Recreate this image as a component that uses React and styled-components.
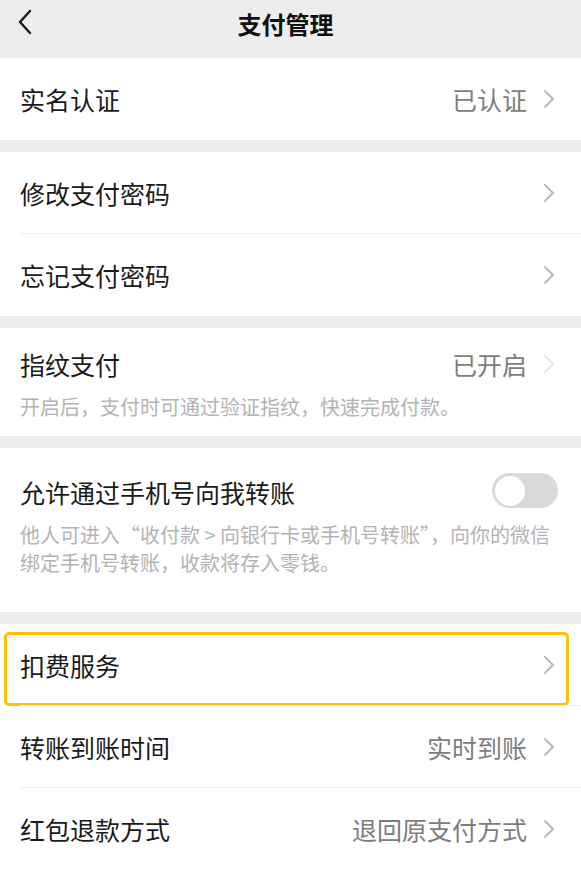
import React from "react";
import styled, { createGlobalStyle } from "styled-components";

const GlobalStyle = createGlobalStyle`
  * { box-sizing: border-box; }
  html, body { margin: 0; padding: 0; background: #ededed; }
  body {
    font-family: "Noto Sans CJK SC", "Noto Sans", "Liberation Sans", sans-serif;
    -webkit-font-smoothing: antialiased;
  }
`;

const Page = styled.div`
  width: 581px;
  min-height: 869px;
  background: #ededed;
  display: flex;
  flex-direction: column;
  gap: 12px;
  overflow: hidden;
`;

const Header = styled.header`
  height: 58px;
  display: grid;
  grid-template-columns: 60px 1fr 60px;
  align-items: start;
  background: #ededed;
  margin-bottom: -12px;
`;

const BackButton = styled.button`
  border: none;
  background: none;
  padding: 9px 0 0 16px;
  display: flex;
  align-items: center;
  color: #1a1a1a;
  cursor: pointer;
`;

const Title = styled.h1`
  margin: 0;
  padding-top: 8px;
  padding-right: 10px;
  text-align: center;
  font-size: 24px;
  font-weight: 600;
  line-height: 32px;
  color: #111;
`;

const Section = styled.section`
  background: #fff;
  display: flex;
  flex-direction: column;
`;

const Row = styled.div`
  position: relative;
  height: 82px;
  display: flex;
  align-items: center;
  padding: 0 26px 0 20px;
  &:not(:last-child)::after {
    content: "";
    position: absolute;
    left: 20px;
    right: 0;
    bottom: 0;
    height: 1px;
    background: #ececec;
  }
`;

const Label = styled.span`
  flex: 1;
  font-size: 25px;
  line-height: 30px;
  color: #1a1a1a;
`;

const Value = styled.span`
  font-size: 25px;
  line-height: 30px;
  color: #7d7d7d;
  margin-right: 16px;
`;

const Block = styled.div`
  padding: ${(p) => p.$pad};
  display: flex;
  flex-direction: column;
  gap: 14px;
`;

const BlockHead = styled.div`
  display: flex;
  align-items: center;
  height: 30px;
  padding-right: ${(p) => p.$right || "26px"};
`;

const Desc = styled.p`
  margin: 0;
  font-size: 20px;
  line-height: 28px;
  color: #b3b3b3;
  white-space: nowrap;
`;

const Toggle = styled.div`
  width: 66px;
  height: 35px;
  border-radius: 18px;
  background: #d9d9d9;
  padding: 2.5px;
  display: flex;
  align-items: center;
  margin-top: -3px;
`;

const Knob = styled.div`
  width: 30px;
  height: 30px;
  border-radius: 50%;
  background: #fff;
`;

const Highlight = styled.div`
  position: absolute;
  left: 4px;
  right: 12px;
  top: 8px;
  bottom: 0;
  border: 3px solid #ffc107;
  border-radius: 5px;
  pointer-events: none;
`;

const Chevron = ({ color = "#b5b5b5" }) => (
  <svg width="12" height="20" viewBox="0 0 12 20" fill="none" style={{ flexShrink: 0 }}>
    <path d="M2 2 L10 10 L2 18" stroke={color} strokeWidth="1.8" strokeLinecap="round" strokeLinejoin="round" />
  </svg>
);

const BackIcon = () => (
  <svg width="16" height="26" viewBox="0 0 16 26" fill="none">
    <path d="M14 2 L4 13 L14 24" stroke="#1a1a1a" strokeWidth="2.4" strokeLinecap="round" strokeLinejoin="round" />
  </svg>
);

export default function App() {
  return (
    <>
      <GlobalStyle />
      <Page>
        <Header>
          <BackButton aria-label="返回">
            <BackIcon />
          </BackButton>
          <Title>支付管理</Title>
          <span />
        </Header>

        <Section>
          <Row>
            <Label>实名认证</Label>
            <Value>已认证</Value>
            <Chevron />
          </Row>
        </Section>

        <Section>
          <Row>
            <Label>修改支付密码</Label>
            <Chevron />
          </Row>
          <Row>
            <Label>忘记支付密码</Label>
            <Chevron />
          </Row>
        </Section>

        <Section>
          <Block $pad="21px 0 15px 20px">
            <BlockHead>
              <Label>指纹支付</Label>
              <Value>已开启</Value>
              <Chevron color="#e6e6e6" />
            </BlockHead>
            <Desc>开启后，支付时可通过验证指纹，快速完成付款。</Desc>
          </Block>
        </Section>

        <Section>
          <Block $pad="29px 0 35px 20px">
            <BlockHead $right="23px">
              <Label>允许通过手机号向我转账</Label>
              <Toggle>
                <Knob />
              </Toggle>
            </BlockHead>
            <Desc>
              他人可进入“收付款 &gt; 向银行卡或手机号转账”，向你的微信
              <br />
              绑定手机号转账，收款将存入零钱。
            </Desc>
          </Block>
        </Section>

        <Section>
          <Row>
            <Label>扣费服务</Label>
            <Chevron />
            <Highlight />
          </Row>
          <Row>
            <Label>转账到账时间</Label>
            <Value>实时到账</Value>
            <Chevron />
          </Row>
          <Row>
            <Label>红包退款方式</Label>
            <Value>退回原支付方式</Value>
            <Chevron />
          </Row>
        </Section>
      </Page>
    </>
  );
}
